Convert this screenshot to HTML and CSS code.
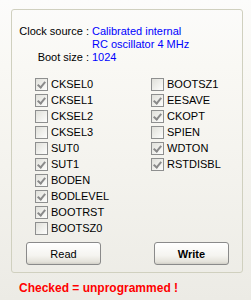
FILE: index.html
```html
<!DOCTYPE html>
<html lang="en">
<head>
    <meta charset="UTF-8">
    <title>Fuse bits</title>
    <link rel="stylesheet" href="styles.css">
</head>
<body>

<div class="group">
    <div class="info">
        <span class="label">Clock source :</span>
        <span class="value">Calibrated internal<br>RC oscillator 4 MHz</span>
        <span class="label">Boot size :</span>
        <span class="value">1024</span>
    </div>

    <div class="fuses">
        <div class="fuse-col">
            <label class="fuse"><span class="box checked"></span>CKSEL0</label>
            <label class="fuse"><span class="box checked"></span>CKSEL1</label>
            <label class="fuse"><span class="box"></span>CKSEL2</label>
            <label class="fuse"><span class="box"></span>CKSEL3</label>
            <label class="fuse"><span class="box"></span>SUT0</label>
            <label class="fuse"><span class="box checked"></span>SUT1</label>
            <label class="fuse"><span class="box checked"></span>BODEN</label>
            <label class="fuse"><span class="box checked"></span>BODLEVEL</label>
            <label class="fuse"><span class="box checked"></span>BOOTRST</label>
            <label class="fuse"><span class="box"></span>BOOTSZ0</label>
        </div>
        <div class="fuse-col">
            <label class="fuse"><span class="box"></span>BOOTSZ1</label>
            <label class="fuse"><span class="box checked"></span>EESAVE</label>
            <label class="fuse"><span class="box checked"></span>CKOPT</label>
            <label class="fuse"><span class="box"></span>SPIEN</label>
            <label class="fuse"><span class="box checked"></span>WDTON</label>
            <label class="fuse"><span class="box checked"></span>RSTDISBL</label>
        </div>
    </div>

    <div class="buttons">
        <button type="button">Read</button>
        <button type="button" class="bold">Write</button>
    </div>
</div>

<p class="note">Checked = unprogrammed !</p>

</body>
</html>
```

FILE: styles.css
```css
body {
    margin: 0;
    width: 251px;
    height: 300px;
    overflow: hidden;
    font-family: "Liberation Sans", Arial, sans-serif;
    font-size: 11px;
    color: #000;
    background: linear-gradient(#fcfcfb 0%, #f9f8f4 22%, #f4f3ee 55%, #ecebe5 100%);
}
.group {
    box-sizing: border-box;
    width: 232px;
    height: 264px;
    margin: 9px 0 0 11px;
    padding: 15px 0 0 0;
    border: 1px solid #d0d0bf;
    border-radius: 3px;
}
.info {
    display: grid;
    grid-template-columns: 77px auto;
    column-gap: 3px;
    line-height: 13px;
}
.info .label {
    text-align: right;
}
.info .value {
    color: #0000ff;
}
.fuses {
    display: flex;
    margin: 12px 0 0 23px;
}
.fuse-col {
    flex: 0 0 116px;
}
.fuse-col + .fuse-col {
    flex: 1 1 auto;
}
.fuse {
    display: flex;
    align-items: center;
    height: 16px;
}
.box {
    box-sizing: border-box;
    width: 13px;
    height: 13px;
    margin-right: 3px;
    border: 1px solid #8e8f8f;
    background: linear-gradient(135deg, #e0e0da, #fdfdfc);
    position: relative;
}
.box.checked::after {
    content: "";
    position: absolute;
    left: 3px;
    top: 1px;
    width: 3px;
    height: 6px;
    border: solid #8a8a8a;
    border-width: 0 2px 2px 0;
    transform: rotate(40deg);
}
.buttons {
    display: flex;
    gap: 53px;
    margin: 6px 0 0 14px;
}
button {
    box-sizing: border-box;
    flex: 0 0 75px;
    width: 75px;
    height: 23px;
    padding: 0;
    font-family: "Liberation Sans", Arial, sans-serif;
    font-size: 11px;
    color: #000;
    border: 1px solid #8a8a8a;
    border-radius: 3px;
    background: linear-gradient(#ffffff 0%, #f5f4f0 60%, #e4e2da 90%, #d0cec6 100%);
}
button.bold {
    font-weight: bold;
}
.note {
    margin: 8px 0 0 19px;
    font-size: 12px;
    line-height: 14px;
    font-weight: bold;
    color: #ff0000;
}
```
